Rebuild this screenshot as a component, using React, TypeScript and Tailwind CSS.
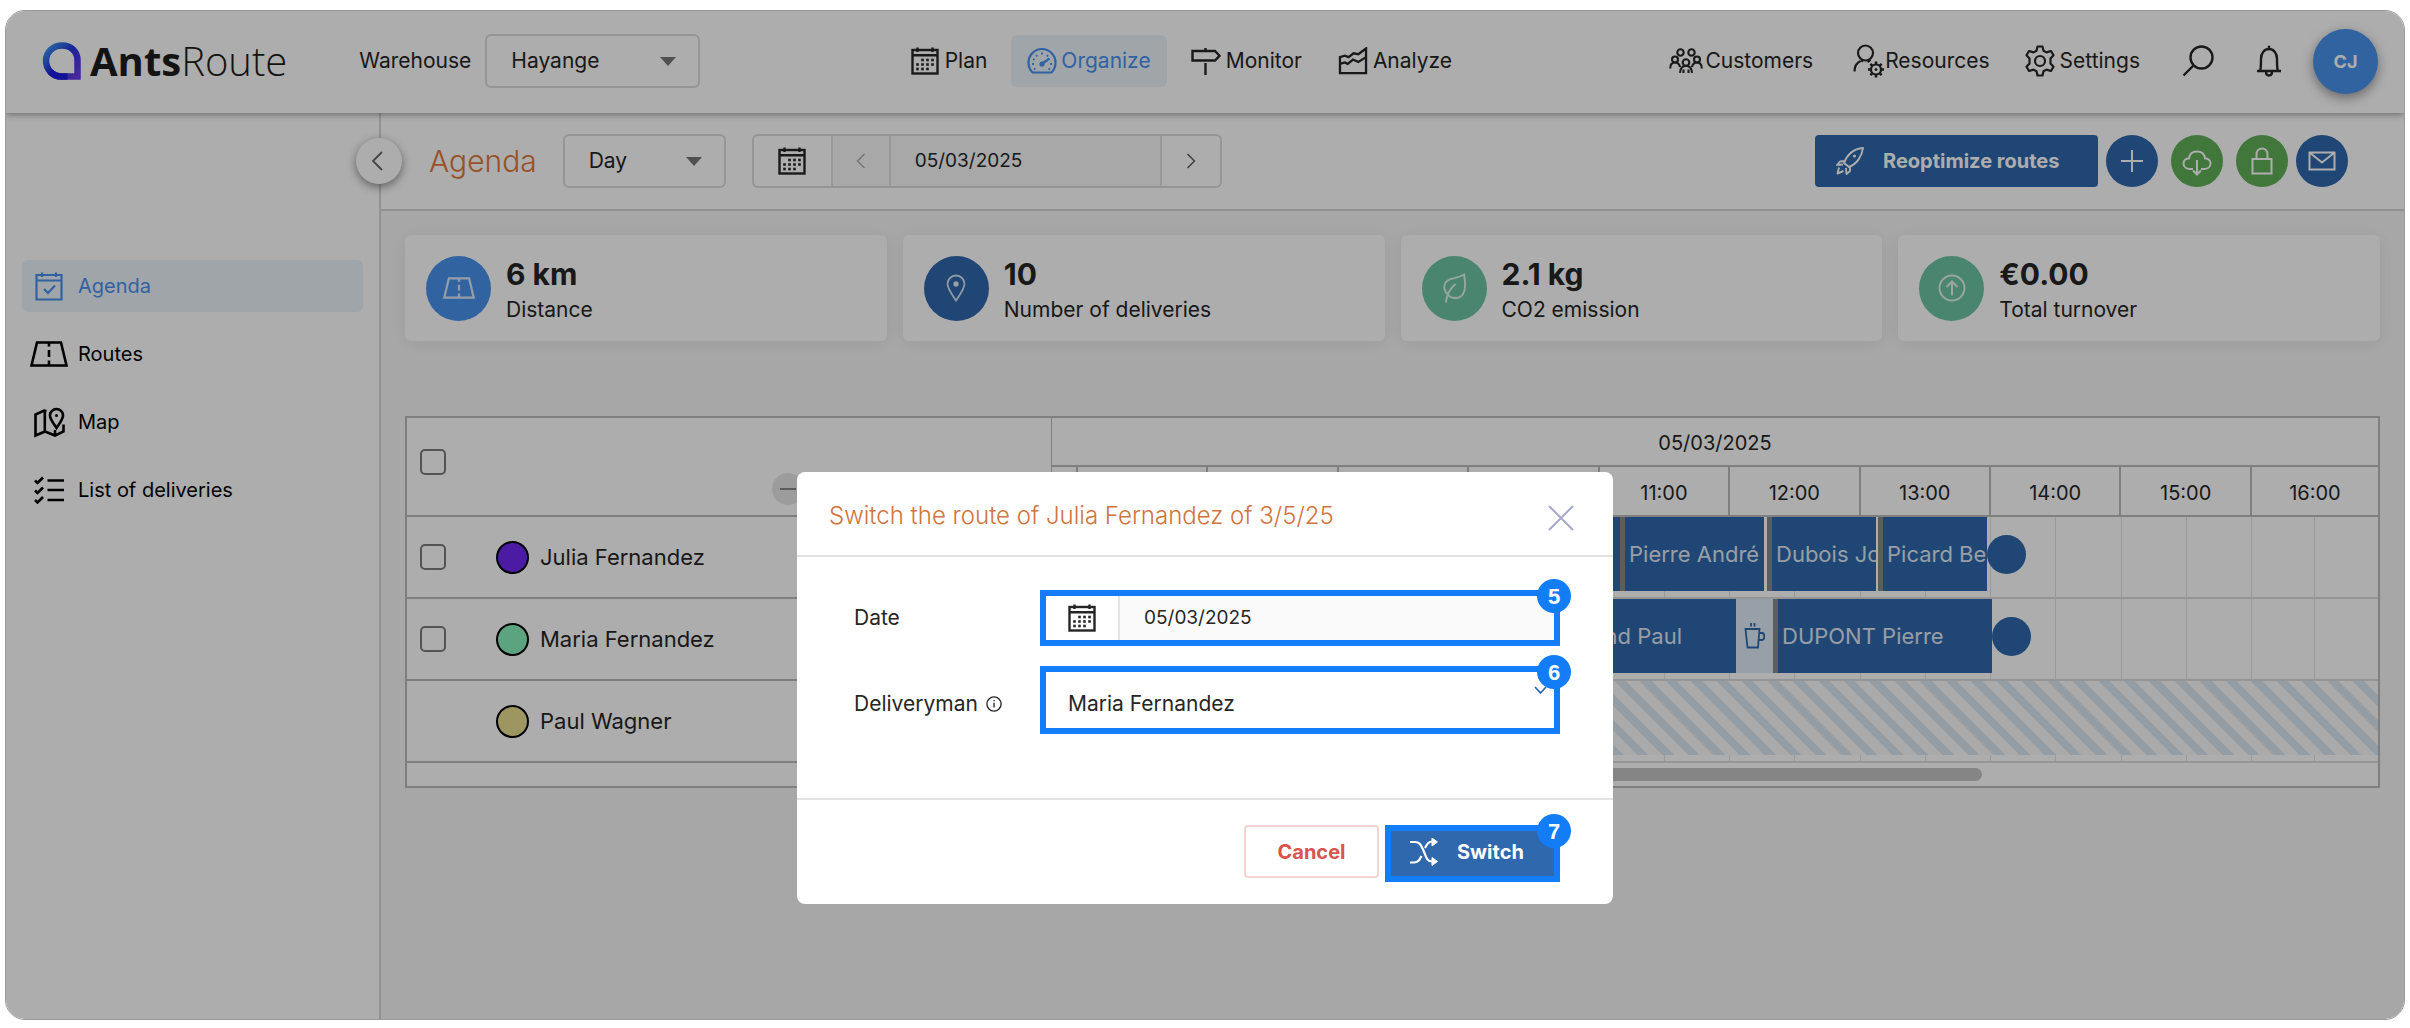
import React from "react";

type IconProps = { className?: string };

function Svg({ box, className, sw = 2, children }: { box: string; className?: string; sw?: number; children: React.ReactNode }) {
  return (
    <svg viewBox={box} className={className} fill="none" stroke="currentColor" strokeWidth={sw} aria-hidden="true">
      {children}
    </svg>
  );
}

function CalendarIcon({ className }: IconProps) {
  const dots: [number, number][] = [
    [11.5, 13], [16.5, 13], [21.5, 13],
    [6.5, 17.5], [11.5, 17.5], [16.5, 17.5], [21.5, 17.5],
    [6.5, 22], [11.5, 22], [16.5, 22],
  ];
  return (
    <Svg box="0 0 28 28" className={className} sw={2.4}>
      <rect x="1.5" y="3" width="25" height="23.5" />
      <path d="M1.5 8.2h25M6.5 0.5v4.500M21.500 .5v4.500" />
      {dots.map(([x, y]) => (
        <rect key={`${x}-${y}`} x={x - 1.3} y={y - 1.3} width="2.600" height="2.600" fill="currentColor" stroke="none" />
      ))}
    </Svg>
  );
}

function GaugeIcon({ className }: IconProps) {
  return (
    <Svg box="0 0 30 28" className={className}>
      <path d="M5.500 25.500C3 23 1.500 19.500 1.500 15.500a13.500 13.500 0 0 1 27 0c0 4-1.500 7.500-4 10z" strokeWidth="2.200" />
      <path d="M15.500 16.500l7-5" strokeWidth="2.400" />
      <circle cx="15" cy="17" r="2.600" fill="currentColor" stroke="none" />
      <path d="M5 17h2M6 12l1.700.8M9 8l1.200 1.500M15 5.500v2M21 8l-1.200 1.500M23 17h2M7 22.500l1.500-1M23 22.500l-1.500-1" strokeWidth="1.800" />
    </Svg>
  );
}

function SignpostIcon({ className }: IconProps) {
  return (
    <Svg box="0 0 30 28" className={className} sw={2.4}>
      <path d="M1.500 4h22.500l4.500 4.800-4.500 4.700H1.500zM14.500 1v3M14.500 16v12" />
    </Svg>
  );
}

function AreaChartIcon({ className }: IconProps) {
  return (
    <Svg box="0 0 30 29" className={className} sw={2.4}>
      <path d="M1.500 10.500l5-1.500 4 1.500 5-4 5 1 8-6v25.500h-27zM1.500 17.500l5-1.500 3 1.500 5.500-4.500 5.500 2.500 8-5" />
    </Svg>
  );
}

function PeopleIcon({ className }: IconProps) {
  return (
    <Svg box="0 0 34 26" className={className} sw={2.100}>
      <circle cx="11.500" cy="4.500" r="3.200" />
      <circle cx="22.500" cy="4.500" r="3.200" />
      <circle cx="6" cy="11.500" r="3" />
      <circle cx="28" cy="11.500" r="3" />
      <circle cx="17" cy="14.500" r="3.300" />
      <path d="M1.200 20.500c0-3.500 1.800-6 4.800-6s4.500 2 5 4.500M32.800 20.500c0-3.500-1.800-6-4.800-6s-4.500 2-5 4.500M11 24.800c.3-4 2.500-7 6-7s5.700 3 6 7M14.500 21.500v3.500M19.500 21.500v3.500" />
    </Svg>
  );
}

function PersonGearIcon({ className }: IconProps) {
  return (
    <Svg box="0 0 32 34" className={className} sw={2.200}>
      <path d="M1.500 27.500c0-5 2-8.500 6-10.500M10 17.500l-2-1.200M17.500 15.800l-3 2.200" />
      <circle cx="12.500" cy="9" r="7.500" />
      <circle cx="23" cy="25.500" r="5" />
      <circle cx="23" cy="25.500" r="1" fill="currentColor" strokeWidth="1" />
      <path d="M23 17.500v3M23 30.500v3M15 25.500h3M28 25.500h3M17.400 19.900l2 2M26.600 29.100l2 2M28.600 19.900l-2 2M19.400 29.100l-2 2" strokeWidth="2.600" />
    </Svg>
  );
}

function GearIcon({ className }: IconProps) {
  return (
    <Svg box="0 0 32 32" className={className} sw={2.200}>
      <circle cx="16" cy="16" r="5" />
      <path strokeLinejoin="round" d="M13.500 1.500h5l1 4.200 3 1.700 4.500-1.400 2.500 4.200-3 3.300v5l3 3.300-2.500 4.200-4.500-1.400-3 1.700-1 4.200h-5l-1-4.200-3-1.700-4.500 1.400-2.500-4.200 3-3.300v-5l-3-3.300 2.500-4.200 4.500 1.400 3-1.700z" />
    </Svg>
  );
}

function SearchIcon({ className }: IconProps) {
  return (
    <Svg box="0 0 32 32" className={className} sw={2.400}>
      <circle cx="19.500" cy="12.500" r="11" />
      <path d="M11.500 20.500L1.500 30.500" />
    </Svg>
  );
}

function BellIcon({ className }: IconProps) {
  return (
    <Svg box="0 0 26 32" className={className} sw={2.400}>
      <path d="M1 26h24M4 26c1-2 1-6 1-12 0-6 3.500-10 8-10s8 4 8 10c0 6 0 10 1 12M13 4V.8M10 26.500c0 5.300 6 5.300 6 0" />
    </Svg>
  );
}

function RocketIcon({ className }: IconProps) {
  return (
    <Svg box="0 0 28 28" className={className} sw={1.900}>
      <path strokeLinejoin="round" d="M8 16c2.500-6.500 8-14 19-15-1 8-6 16-14 19zM8.500 14L4 14.500 1 18l6-.5M14 19.500v4.500l-3.500 3-.5-6M3 20.500l-1.500 6 6-2.500" />
      <circle cx="18.500" cy="9" r="1.600" fill="currentColor" stroke="none" />
    </Svg>
  );
}

function CloudIcon({ className }: IconProps) {
  return (
    <Svg box="0 0 30 26" className={className}>
      <path d="M11 19H8c-4 0-6.500-2.500-6.500-5.500S4 8.500 7 8.300C7.500 4 10.500 1.500 15 1.500s7.500 2.500 8 6.800c3 .2 5.500 2.200 5.500 5.200S26 19 22 19h-3M15 10v14M11 20.500l4 4 4-4" />
    </Svg>
  );
}

function LockIcon({ className }: IconProps) {
  return (
    <Svg box="0 0 22 28" className={className}>
      <path d="M1.500 12h19v14.500h-19zM5.500 12V7.500c0-8 11-8 11 0V12" />
    </Svg>
  );
}

function MailIcon({ className }: IconProps) {
  return (
    <Svg box="0 0 28 20" className={className}>
      <path d="M1.500 1.500h25v17h-25zM1.500 1.500L14 11.500l12.500-10" />
    </Svg>
  );
}

function RoadIcon({ className }: IconProps) {
  return (
    <Svg box="0 0 38 26" className={className} sw={2.600}>
      <path d="M7 1.500h24l5.500 23h-35zM19 1.500v4M19 9v7M19 19.500v5" />
    </Svg>
  );
}

function CalendarCheckIcon({ className }: IconProps) {
  return (
    <Svg box="0 0 28 29" className={className} sw={2.200}>
      <path d="M1.500 3h25v24.500h-25zM1.500 8.500h25M7 .5v4.500M21 .5v4.500M9 17l4 4 7-7.500" />
    </Svg>
  );
}

function MapIcon({ className }: IconProps) {
  return (
    <Svg box="0 0 31 31" className={className} sw={2.600}>
      <path d="M12.500 4L10 3.500l-8.500 4v21l9.500-4 10 4 8.500-4v-7M10.800 4v20M21 23v5" />
      <path d="M22.500 21c-4-6-6.500-9-6.500-12.500a6.500 6.500 0 0 1 13 0c0 3.500-2.500 6.500-6.500 12.500z" />
      <circle cx="22.500" cy="8.500" r="1.500" fill="currentColor" stroke="none" />
    </Svg>
  );
}

function ChecklistIcon({ className }: IconProps) {
  return (
    <Svg box="0 0 30 28" className={className} sw={2.600}>
      <path d="M13.500 4.500H30M13.500 14H30M13.500 24H30M1 4.500l2.500 2.500L9 1.500M1 14.500L3.500 17 9 11.500M1 24l2.500 2.500L9 21" />
    </Svg>
  );
}

function PinIcon({ className }: IconProps) {
  return (
    <Svg box="0 0 20 28" className={className} sw={1.800}>
      <path d="M10 26.500C5 19 1.500 14.500 1.500 10a8.500 8.500 0 0 1 17 0c0 4.500-3.500 9-8.500 16.500z" />
      <circle cx="10" cy="10" r="1.800" fill="currentColor" />
    </Svg>
  );
}

function LeafIcon({ className }: IconProps) {
  return (
    <Svg box="0 0 26 30" className={className} sw={1.900}>
      <path d="M23 1.500C24.500 9 25 16 22 21c-3 5-10 5-14 2-5-4-6-10-3-14 3.500-4.500 11-3 18-7.500zM5 29.500c.5-8 4-14 9.500-18.500" />
    </Svg>
  );
}

function ArrowUpCircleIcon({ className }: IconProps) {
  return (
    <Svg box="0 0 28 28" className={className}>
      <circle cx="14" cy="14" r="12.500" />
      <path d="M14 21.500V7.500M8.500 13L14 7.500l5.500 5.500" />
    </Svg>
  );
}

function CupIcon({ className }: IconProps) {
  return (
    <Svg box="0 0 22 26" className={className} sw={1.800}>
      <path d="M1.500 6h14l-1.500 18.500H3.500zM15.500 10h2.500c3 0 3 7 0 7h-3M7 0v3.500M10.500 0v3.500" />
    </Svg>
  );
}

function ShuffleIcon({ className }: IconProps) {
  return (
    <Svg box="0 0 28 28" className={className} sw={2.200}>
      <path d="M0 4h5c5 0 6 3 8.500 8.500C16 19 17 23.500 22 23.500h3M0 24.500h4c4 0 5.500-2.500 7.500-6.500M15 10c2-4 3.500-6.500 7.500-6.500H25" />
      <path d="M22 0l5.500 4L22 8zM22 19.500l5.500 4-5.500 4z" fill="currentColor" strokeWidth="1" />
    </Svg>
  );
}

function Chevron({ className, dir }: { className?: string; dir: "left" | "right" | "down" }) {
  const d = { left: "M11 1L2 10l9 9", right: "M2 1l9 9-9 9", down: "M1 4l5.500 6L12 4" }[dir];
  return (
    <Svg box={dir === "down" ? "0 0 13 14" : "0 0 13 20"} className={className} sw={1.800}>
      <path d={d} />
    </Svg>
  );
}

function Logo() {
  return (
    <a href="#" className="flex items-center gap-2 text-[#1c1c1c]">
      <svg viewBox="0 0 40 38" className="h-[38px] w-10" fill="none" aria-hidden="true">
        <defs>
          <linearGradient id="ring" x1="0" y1="0" x2="1" y2="1">
            <stop offset="0" stopColor="#3fa0f0" />
            <stop offset="0.450" stopColor="#2438dc" />
            <stop offset="1" stopColor="#6a3ae8" />
          </linearGradient>
        </defs>
        <path d="M35.500 34.500V18.500C35.500 9.500 29 3.500 20 3.500S4 10 4 18.500s6.500 16 15.500 16z" stroke="url(#ring)" strokeWidth="6.500" />
        <path d="M8 29.500c3 3.300 7 5 11.500 5h6" stroke="#1c1ce0" strokeWidth="6.500" />
      </svg>
      <span className="font-['Open_Sans'] text-[40px] leading-none">
        <b className="font-bold">Ants</b>
        <span className="font-light">Route</span>
      </span>
    </a>
  );
}

function Picker({ label, id, value, className }: { label: string; id: string; value: string; className: string }) {
  return (
    <div className={`relative ${className}`}>
      <select id={id} aria-label={label} defaultValue={value} className="h-[54px] w-full appearance-none rounded-md border-2 border-[#dcdcdc] bg-white pl-6 text-[21px]">
        <option>{value}</option>
      </select>
      <span className="pointer-events-none absolute top-[23px] right-6 border-x-8 border-t-[9px] border-x-transparent border-t-[#777]" />
    </div>
  );
}

const mainNav = [
  { label: "Plan", Icon: CalendarIcon, active: false },
  { label: "Organize", Icon: GaugeIcon, active: true },
  { label: "Monitor", Icon: SignpostIcon, active: false },
  { label: "Analyze", Icon: AreaChartIcon, active: false },
];

function Header() {
  return (
    <header className="relative z-10 flex h-[102px] items-center justify-between bg-white pr-[26px] pb-[2px] pl-9 shadow-[0_2px_6px_rgba(0,0,0,0.350)]">
      <div className="flex items-center">
        <Logo />
        <label htmlFor="warehouse" className="mr-[14px] ml-[72px]">Warehouse</label>
        <Picker id="warehouse" label="Warehouse" value="Hayange" className="w-[215px]" />
      </div>
      <nav className="mr-2 flex items-center gap-1">
        {mainNav.map(({ label, Icon, active }) => (
          <a
            key={label}
            href="#"
            className={
              active
                ? "mx-1 flex h-[52px] items-center gap-1 rounded-md bg-[#ecf4fb] px-4 text-[#4a90ee]"
                : "flex h-[52px] items-center gap-[5px] px-4"
            }
          >
            <Icon className="h-7 w-[30px]" />
            {label}
          </a>
        ))}
      </nav>
      <div className="flex items-center">
        <a href="#" className="flex items-center gap-[2px]"><PeopleIcon className="h-[26px] w-[34px]" />Customers</a>
        <a href="#" className="ml-10 flex items-center"><PersonGearIcon className="h-[34px] w-8" />Resources</a>
        <a href="#" className="ml-[34px] flex items-center gap-1"><GearIcon className="size-8" />Settings</a>
        <button type="button" aria-label="Search" className="ml-[42px]"><SearchIcon className="size-8" /></button>
        <button type="button" aria-label="Notifications" className="ml-[42px]"><BellIcon className="h-8 w-[26px]" /></button>
        <button type="button" aria-label="Account" className="ml-[31px] size-[65px] rounded-full bg-[#4a92ee] text-[18px] font-bold text-white shadow-[0_4px_12px_rgba(0,0,0,0.400)]">CJ</button>
      </div>
    </header>
  );
}

const sideNav = [
  { label: "Agenda", Icon: CalendarCheckIcon, icon: "h-[29px] w-7" },
  { label: "Routes", Icon: RoadIcon, icon: "h-[26px] w-[38px]" },
  { label: "Map", Icon: MapIcon, icon: "h-[31px] w-[31px]" },
  { label: "List of deliveries", Icon: ChecklistIcon, icon: "h-7 w-[30px]" },
];

function Sidebar() {
  return (
    <aside className="relative w-[375px] shrink-0 border-r-2 border-[#d8d8d8] bg-white px-4 pt-[147px]">
      <button type="button" aria-label="Collapse menu" className="absolute top-[25px] -right-[23px] z-10 flex size-[46px] items-center justify-center rounded-full bg-white pr-1 text-[#666] shadow-[0_3px_10px_rgba(0,0,0,0.450)]">
        <Chevron dir="left" className="h-5 w-[13px]" />
      </button>
      <nav className="flex flex-col gap-4 text-[20px]">
        {sideNav.map(({ label, Icon, icon }, i) => (
          <a key={label} href="#" className={i === 0 ? "flex h-[52px] items-center rounded-md bg-[#ecf4fb] text-[#4a90ee]" : "flex h-[52px] items-center text-black"}>
            <span className="mr-[2px] flex w-[54px] justify-center"><Icon className={icon} /></span>
            {label}
          </a>
        ))}
      </nav>
    </aside>
  );
}

function Toolbar() {
  return (
    <div className="flex h-[98px] items-center border-b-2 border-[#d8d8d8] bg-white pr-14 pl-12">
      <h1 className="text-[30px] font-light text-[#e07838]">Agenda</h1>
      <Picker id="period" label="Period" value="Day" className="ml-[26px] w-[163px]" />
      <div className="ml-[26px] flex h-[54px] w-[470px] items-stretch rounded-md border-2 border-[#dcdcdc]">
        <button type="button" aria-label="Open calendar" className="flex w-[77px] items-center justify-center"><CalendarIcon className="size-7" /></button>
        <button type="button" aria-label="Previous day" className="flex w-[60px] items-center justify-center border-x-2 border-[#e2e2e2] bg-[#f8f8f8] text-[#aaa]"><Chevron dir="left" className="h-4 w-[10px]" /></button>
        <input aria-label="Day shown" defaultValue="05/03/2025" className="min-w-0 flex-1 bg-[#f8f8f8] pl-6 text-[19px]" />
        <button type="button" aria-label="Next day" className="flex w-[60px] items-center justify-center border-l-2 border-[#e2e2e2] text-[#555]"><Chevron dir="right" className="h-4 w-[10px]" /></button>
      </div>
      <div className="ml-auto flex items-center text-white">
        <button type="button" className="flex h-[52px] w-[283px] items-center rounded-sm bg-[#2f68ac] pl-[21px] text-[20px] font-bold">
          <RocketIcon className="mr-[19px] size-7" />
          Reoptimize routes
        </button>
        <button type="button" aria-label="Add" className="ml-2 flex size-[52px] items-center justify-center rounded-full bg-[#2f68ac]">
          <Svg box="0 0 24 24" className="size-6"><path d="M12 1v22M1 12h22" /></Svg>
        </button>
        <button type="button" aria-label="Download" className="ml-[13px] flex size-[52px] items-center justify-center rounded-full bg-[#60b058]"><CloudIcon className="mt-1 h-[26px] w-[30px]" /></button>
        <button type="button" aria-label="Lock" className="ml-[13px] flex size-[52px] items-center justify-center rounded-full bg-[#60b058]"><LockIcon className="h-7 w-[22px]" /></button>
        <button type="button" aria-label="Send by mail" className="ml-2 flex size-[52px] items-center justify-center rounded-full bg-[#2f68ac]"><MailIcon className="h-5 w-7" /></button>
      </div>
    </div>
  );
}

const stats = [
  { value: "6 km", label: "Distance", color: "bg-[#4a92ee]", icon: <RoadIcon className="h-[22px] w-8" /> },
  { value: "10", label: "Number of deliveries", color: "bg-[#2f68ac]", icon: <PinIcon className="h-7 w-5" /> },
  { value: "2.1 kg", label: "CO2 emission", color: "bg-[#6ec6a4]", icon: <LeafIcon className="h-[30px] w-[26px]" /> },
  { value: "€0.00", label: "Total turnover", color: "bg-[#6ec6a4]", icon: <ArrowUpCircleIcon className="size-7" /> },
];

function Stats() {
  return (
    <div className="grid grid-cols-4 gap-4">
      {stats.map((s) => (
        <section key={s.label} className="flex h-[106px] items-center gap-[15px] rounded-md bg-white px-[21px] shadow-[0_2px_18px_rgba(0,0,0,0.080)]">
          <span className={`flex size-[65px] shrink-0 items-center justify-center rounded-full text-white/80 ${s.color}`}>{s.icon}</span>
          <div className="pt-2">
            <p className="text-[30px] leading-9 font-bold">{s.value}</p>
            <p className="leading-9">{s.label}</p>
          </div>
        </section>
      ))}
    </div>
  );
}

const hours = ["07:00", "08:00", "09:00", "10:00", "11:00", "12:00", "13:00", "14:00", "15:00"];
const halfHours = Array.from({ length: 18 }, (_, i) => i);

function GridRow({ children }: { children?: React.ReactNode }) {
  return (
    <td colSpan={11} className="border-b-2 border-[#dcdcdc] p-0">
      <div className="grid overflow-hidden">
        <div className="col-start-1 row-start-1 flex h-20">
          <span className="w-[26px] border-r border-[#e4e4e4]" />
          {halfHours.map((h) => <span key={h} className="flex-1 border-r border-[#e4e4e4]" />)}
          <span className="w-[63px] border-r border-[#e4e4e4]" />
          <span className="w-[63px]" />
        </div>
        <div className="col-start-1 row-start-1 flex h-[74px] items-stretch text-[22px] whitespace-nowrap text-[#dfe9f4]">{children}</div>
      </div>
    </td>
  );
}

function Bar({ width, children }: { width: string; children?: React.ReactNode }) {
  return <div className={`flex items-center overflow-hidden border-l-[5px] border-[#8a8a8a] bg-[#2f68ac] pl-1 ${width}`}>{children}</div>;
}

function DriverCell({ name, color, selectable }: { name: string; color: string; selectable: boolean }) {
  return (
    <th scope="row" className="h-[82px] border-r border-b-2 border-[#bcbcbc] p-0 text-left font-normal">
      <label className="flex items-center pl-[13px]">
        <span className="flex w-[76px]">
          {selectable && <input type="checkbox" className="size-[26px] appearance-none rounded-[5px] border-2 border-[#7c7c7c]" />}
        </span>
        <span className={`mr-[11px] size-[33px] rounded-full border-2 border-black ${color}`} />
        <span className="text-[22px]">{name}</span>
      </label>
    </th>
  );
}

function Scheduler() {
  return (
    <div className="mt-[75px] border-2 border-[#bcbcbc] bg-white">
      <table className="w-full table-fixed border-separate border-spacing-0 text-[20px]">
        <colgroup>
          <col className="w-[645px]" />
          <col className="w-[26px]" />
          {hours.map((h) => <col key={h} />)}
          <col className="w-[126px]" />
        </colgroup>
        <thead>
          <tr className="h-[49px]">
            <th rowSpan={2} className="relative border-r border-b-2 border-[#bcbcbc] p-0 pb-[10px] pl-[13px] text-left">
              <input type="checkbox" aria-label="Select all" className="block size-[26px] appearance-none rounded-[5px] border-2 border-[#7c7c7c]" />
              <button type="button" aria-label="Zoom out" className="absolute top-[55px] left-[365px] flex size-8 items-center justify-center rounded-full bg-[#e6e6e6]">
                <span className="h-[2px] w-4 bg-[#888]" />
              </button>
            </th>
            <th colSpan={11} className="border-b-2 border-[#bcbcbc] p-0 pt-[3px] font-normal">05/03/2025</th>
          </tr>
          <tr className="h-[50px]">
            <th className="border-r-2 border-b-2 border-[#bcbcbc] p-0" />
            {hours.map((h) => <th key={h} scope="col" className="border-r-2 border-b-2 border-[#bcbcbc] p-0 pt-[3px] font-normal">{h}</th>)}
            <th scope="col" className="border-b-2 border-[#bcbcbc] p-0 pt-[3px] font-normal">16:00</th>
          </tr>
        </thead>
        <tbody>
          <tr>
            <DriverCell name="Julia Fernandez" color="bg-[#7028f0]" selectable />
            <GridRow>
              <div className="w-[568px] bg-[#2f68ac]" />
              <Bar width="mr-[3px] w-[144px]">Pierre André</Bar>
              <Bar width="mr-[2px] w-[109px]">Dubois Jo</Bar>
              <Bar width="w-[109px]">Picard Be</Bar>
              <span className="size-[39px] self-center rounded-full bg-[#2f68ac]" />
            </GridRow>
          </tr>
          <tr>
            <DriverCell name="Maria Fernandez" color="bg-[#88f0bc]" selectable />
            <GridRow>
              <div className="flex w-[684px] items-center justify-end bg-[#2f68ac] pr-[54px]">Durand Paul</div>
              <div className="flex w-[37px] items-center justify-center bg-[#dfecf8] text-[#2f68ac]"><CupIcon className="h-[26px] w-[22px]" /></div>
              <Bar width="w-[219px]">DUPONT Pierre</Bar>
              <span className="size-[39px] self-center rounded-full bg-[#2f68ac]" />
            </GridRow>
          </tr>
          <tr>
            <DriverCell name="Paul Wagner" color="bg-[#e8de90]" selectable={false} />
            <GridRow>
              <div className="flex-1 bg-[repeating-linear-gradient(45deg,#dce8f2_0px,#dce8f2_8px,#fbfbfb_8px,#fbfbfb_18px)]" />
            </GridRow>
          </tr>
        </tbody>
      </table>
      <div className="flex h-[23px] pt-[5px] pl-[645px]">
        <div className="h-[13px] w-[930px] rounded-full bg-[#c4c4c4]" />
      </div>
    </div>
  );
}

function Step({ n }: { n: number }) {
  return (
    <span className="absolute -top-[17px] -right-[17px] z-10 flex size-[34px] items-center justify-center rounded-full bg-[#137df8] font-['Liberation_Sans'] text-[22px] font-bold text-white">
      {n}
    </span>
  );
}

function SwitchDialog() {
  return (
    <div role="dialog" aria-modal="true" aria-labelledby="dialog-title" className="w-[816px] rounded-lg bg-white">
      <div className="flex h-[85px] items-center justify-between border-b-2 border-[#e2e2e2] pt-1 pr-[39px] pl-8">
        <h2 id="dialog-title" className="text-[24px] font-light text-[#cf7440]">Switch the route of Julia Fernandez of 3/5/25</h2>
        <button type="button" aria-label="Close" className="text-[#a4a8cc]">
          <Svg box="0 0 26 26" className="mt-1 size-[26px]"><path d="M1 1l24 24M25 1L1 25" /></Svg>
        </button>
      </div>
      <div className="flex flex-col gap-5 pt-[33px] pr-[53px] pb-16 pl-[57px]">
        <div className="flex items-center">
          <label htmlFor="date" className="w-[186px]">Date</label>
          <div className="relative flex h-14 flex-1 border-[6px] border-[#137df8]">
            <button type="button" aria-label="Pick a date" className="flex w-[74px] items-center justify-center border-r-2 border-[#e4e4e4]"><CalendarIcon className="size-7" /></button>
            <input id="date" defaultValue="05/03/2025" className="min-w-0 flex-1 bg-[#fafafa] pl-6 text-[19px]" />
            <Step n={5} />
          </div>
        </div>
        <div className="flex items-center">
          <label htmlFor="deliveryman" className="flex w-[186px] items-center gap-2 pt-2">
            Deliveryman
            <Svg box="0 0 18 18" className="size-4" sw={1.500}>
              <circle cx="9" cy="9" r="8" />
              <path d="M9 7.500V13M9 4.500v1.500" />
            </Svg>
          </label>
          <div className="relative flex h-[68px] flex-1 border-[6px] border-[#137df8]">
            <select id="deliveryman" defaultValue="Maria Fernandez" className="w-full appearance-none bg-white pt-2 pl-[22px] text-[21px]">
              <option>Maria Fernandez</option>
            </select>
            <Chevron dir="down" className="pointer-events-none absolute top-[11px] right-[7px] h-[14px] w-[13px] text-[#2f68ac]" />
            <Step n={6} />
          </div>
        </div>
      </div>
      <div className="flex h-[106px] items-start justify-end gap-[6px] border-t-2 border-[#e2e2e2] pt-[25px] pr-[53px]">
        <button type="button" className="h-[53px] w-[135px] rounded-sm border-2 border-[#f3d4d2] text-[20px] font-bold text-[#d9534f]">Cancel</button>
        <div className="relative border-[6px] border-[#137df8]">
          <button type="button" className="flex h-[45px] w-[163px] items-center gap-[19px] bg-[#2f68ac] pb-1 pl-[19px] text-[20px] font-bold text-white">
            <ShuffleIcon className="size-7" />
            Switch
          </button>
          <Step n={7} />
        </div>
      </div>
    </div>
  );
}

export default function App() {
  return (
    <div className="flex min-h-screen bg-white px-[5px] pt-[10px] pb-2 font-['Inter',sans-serif] text-[21px] text-[#262626]">
      <div className="relative flex flex-1 flex-col overflow-hidden rounded-[20px] border border-[#999]">
        <Header />
        <div className="flex flex-1">
          <Sidebar />
          <main className="min-w-0 flex-1 bg-[#f7f7f7]">
            <Toolbar />
            <div className="px-6 pt-6">
              <Stats />
              <Scheduler />
            </div>
          </main>
        </div>
        <div className="absolute inset-0 z-20 flex items-start justify-center bg-black/[0.320] pt-[461px]">
          <SwitchDialog />
        </div>
      </div>
    </div>
  );
}
